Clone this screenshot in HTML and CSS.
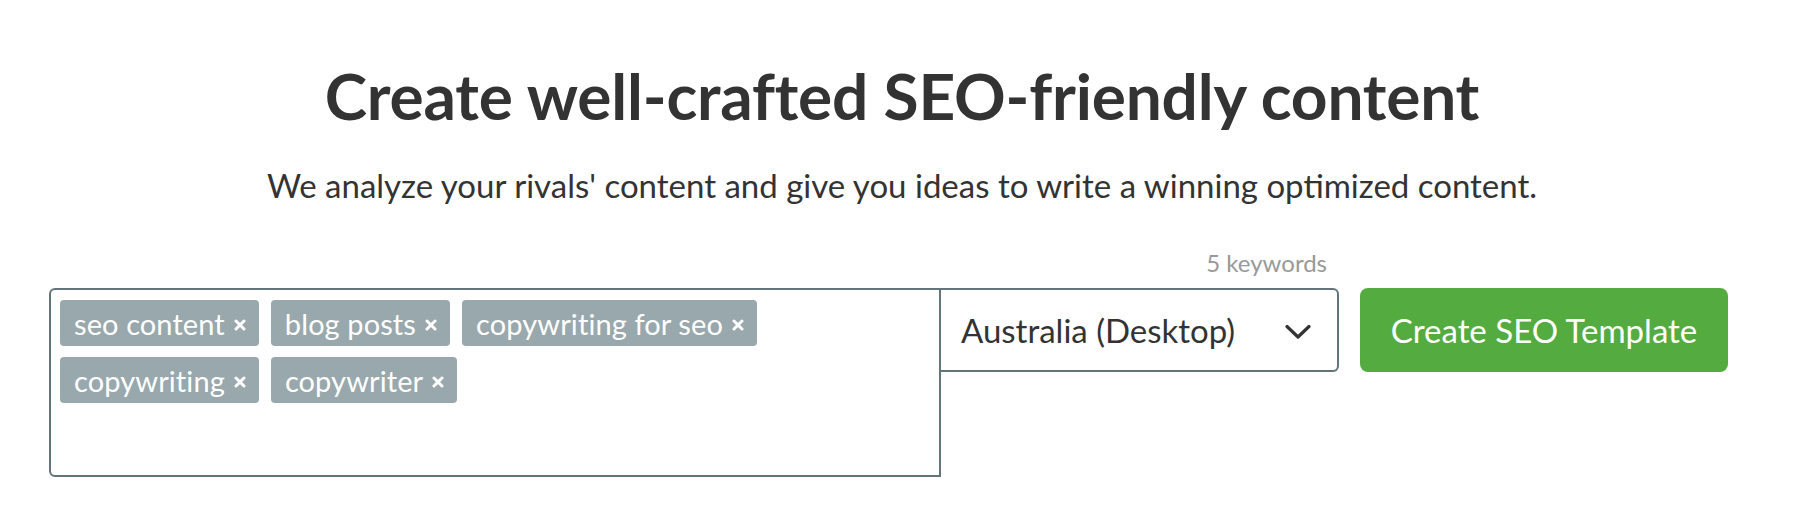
FILE: index.html
```html
<!DOCTYPE html>
<html lang="en">
<head>
<meta charset="utf-8">
<title>SEO Content Template</title>
<link rel="stylesheet" href="styles.css">
</head>
<body>
<main class="page">
  <section class="hero">
    <h1 class="title">Create well-crafted SEO-friendly content</h1>
    <p class="subtitle">We analyze your rivals' content and give you ideas to write a winning optimized content.</p>
  </section>
  <section class="form">
    <div class="counter-row">
      <span class="counter">5 keywords</span>
    </div>
    <div class="form-row">
      <div class="keywords-box">
        <span class="tag">seo content<svg class="tag-x" width="12" height="12" viewBox="0 0 12 12" aria-hidden="true"><path d="M2 2 L10 10 M10 2 L2 10" stroke="#fff" stroke-width="3" stroke-linecap="round"/></svg></span>
        <span class="tag">blog posts<svg class="tag-x" width="12" height="12" viewBox="0 0 12 12" aria-hidden="true"><path d="M2 2 L10 10 M10 2 L2 10" stroke="#fff" stroke-width="3" stroke-linecap="round"/></svg></span>
        <span class="tag">copywriting for seo<svg class="tag-x" width="12" height="12" viewBox="0 0 12 12" aria-hidden="true"><path d="M2 2 L10 10 M10 2 L2 10" stroke="#fff" stroke-width="3" stroke-linecap="round"/></svg></span>
        <span class="tag">copywriting<svg class="tag-x" width="12" height="12" viewBox="0 0 12 12" aria-hidden="true"><path d="M2 2 L10 10 M10 2 L2 10" stroke="#fff" stroke-width="3" stroke-linecap="round"/></svg></span>
        <span class="tag">copywriter<svg class="tag-x" width="12" height="12" viewBox="0 0 12 12" aria-hidden="true"><path d="M2 2 L10 10 M10 2 L2 10" stroke="#fff" stroke-width="3" stroke-linecap="round"/></svg></span>
      </div>
      <div class="select">
        <span class="select-label">Australia (Desktop)</span>
        <svg class="chevron" width="26" height="16" viewBox="0 0 26 16" aria-hidden="true">
          <path d="M2 2.5 L13 13 L24 2.5" fill="none" stroke="#333" stroke-width="3.2" stroke-linecap="round" stroke-linejoin="round"/>
        </svg>
      </div>
      <button class="cta" type="button">Create SEO Template</button>
    </div>
  </section>
</main>
</body>
</html>
```
FILE: styles.css
```css
html, body {
  margin: 0;
  padding: 0;
  background: #ffffff;
}

body {
  font-family: "Lato", "Open Sans", sans-serif;
  color: #333333;
}

.page {
  width: 1820px;
  height: 526px;
  box-sizing: border-box;
  padding-top: 64px;
}

.hero {
  text-align: center;
  padding-right: 16px;
}

.title {
  margin: 0;
  font-size: 64px;
  line-height: 64px;
  font-weight: 700;
  letter-spacing: -0.2px;
  color: #333333;
}

.subtitle {
  margin: 38px 0 0;
  font-size: 33px;
  line-height: 38px;
  font-weight: 400;
  color: #333333;
}

.form {
  padding-left: 49px;
}

.counter-row {
  width: 1290px;
  box-sizing: border-box;
  text-align: right;
  padding-right: 12px;
  margin-top: 44px;
  height: 40px;
}

.counter {
  font-size: 24px;
  line-height: 30px;
  color: #999999;
}

.form-row {
  display: flex;
  align-items: flex-start;
}

.keywords-box {
  width: 892px;
  height: 189px;
  box-sizing: border-box;
  border: 2px solid #63747b;
  border-radius: 6px 0 0 6px;
  padding: 10px 9px;
  display: flex;
  flex-wrap: wrap;
  align-content: flex-start;
  gap: 11px 12px;
}

.tag {
  display: inline-flex;
  align-items: center;
  height: 46px;
  padding: 0 13px 0 14px;
  background: #99a8ac;
  border-radius: 4px;
  color: #ffffff;
  font-size: 29px;
  letter-spacing: 0.1px;
  line-height: 1;
  white-space: nowrap;
}

.tag-x {
  display: block;
  margin-left: 9px;
  margin-top: 3px;
}

.select {
  width: 398px;
  height: 84px;
  box-sizing: border-box;
  border: 2px solid #63747b;
  border-left: 0;
  border-radius: 0 6px 6px 0;
  display: flex;
  align-items: center;
  padding: 0 26px 0 20px;
  justify-content: space-between;
}

.select-label {
  font-size: 33px;
  color: #333333;
}

.chevron {
  display: block;
  margin-top: 4px;
}

.cta {
  margin-left: 21px;
  width: 368px;
  height: 84px;
  border: 0;
  border-radius: 8px;
  background: #54ac40;
  color: #ffffff;
  font-family: "Lato", "Open Sans", sans-serif;
  font-size: 33px;
  font-weight: 400;
  padding: 0;
  cursor: pointer;
}
```
